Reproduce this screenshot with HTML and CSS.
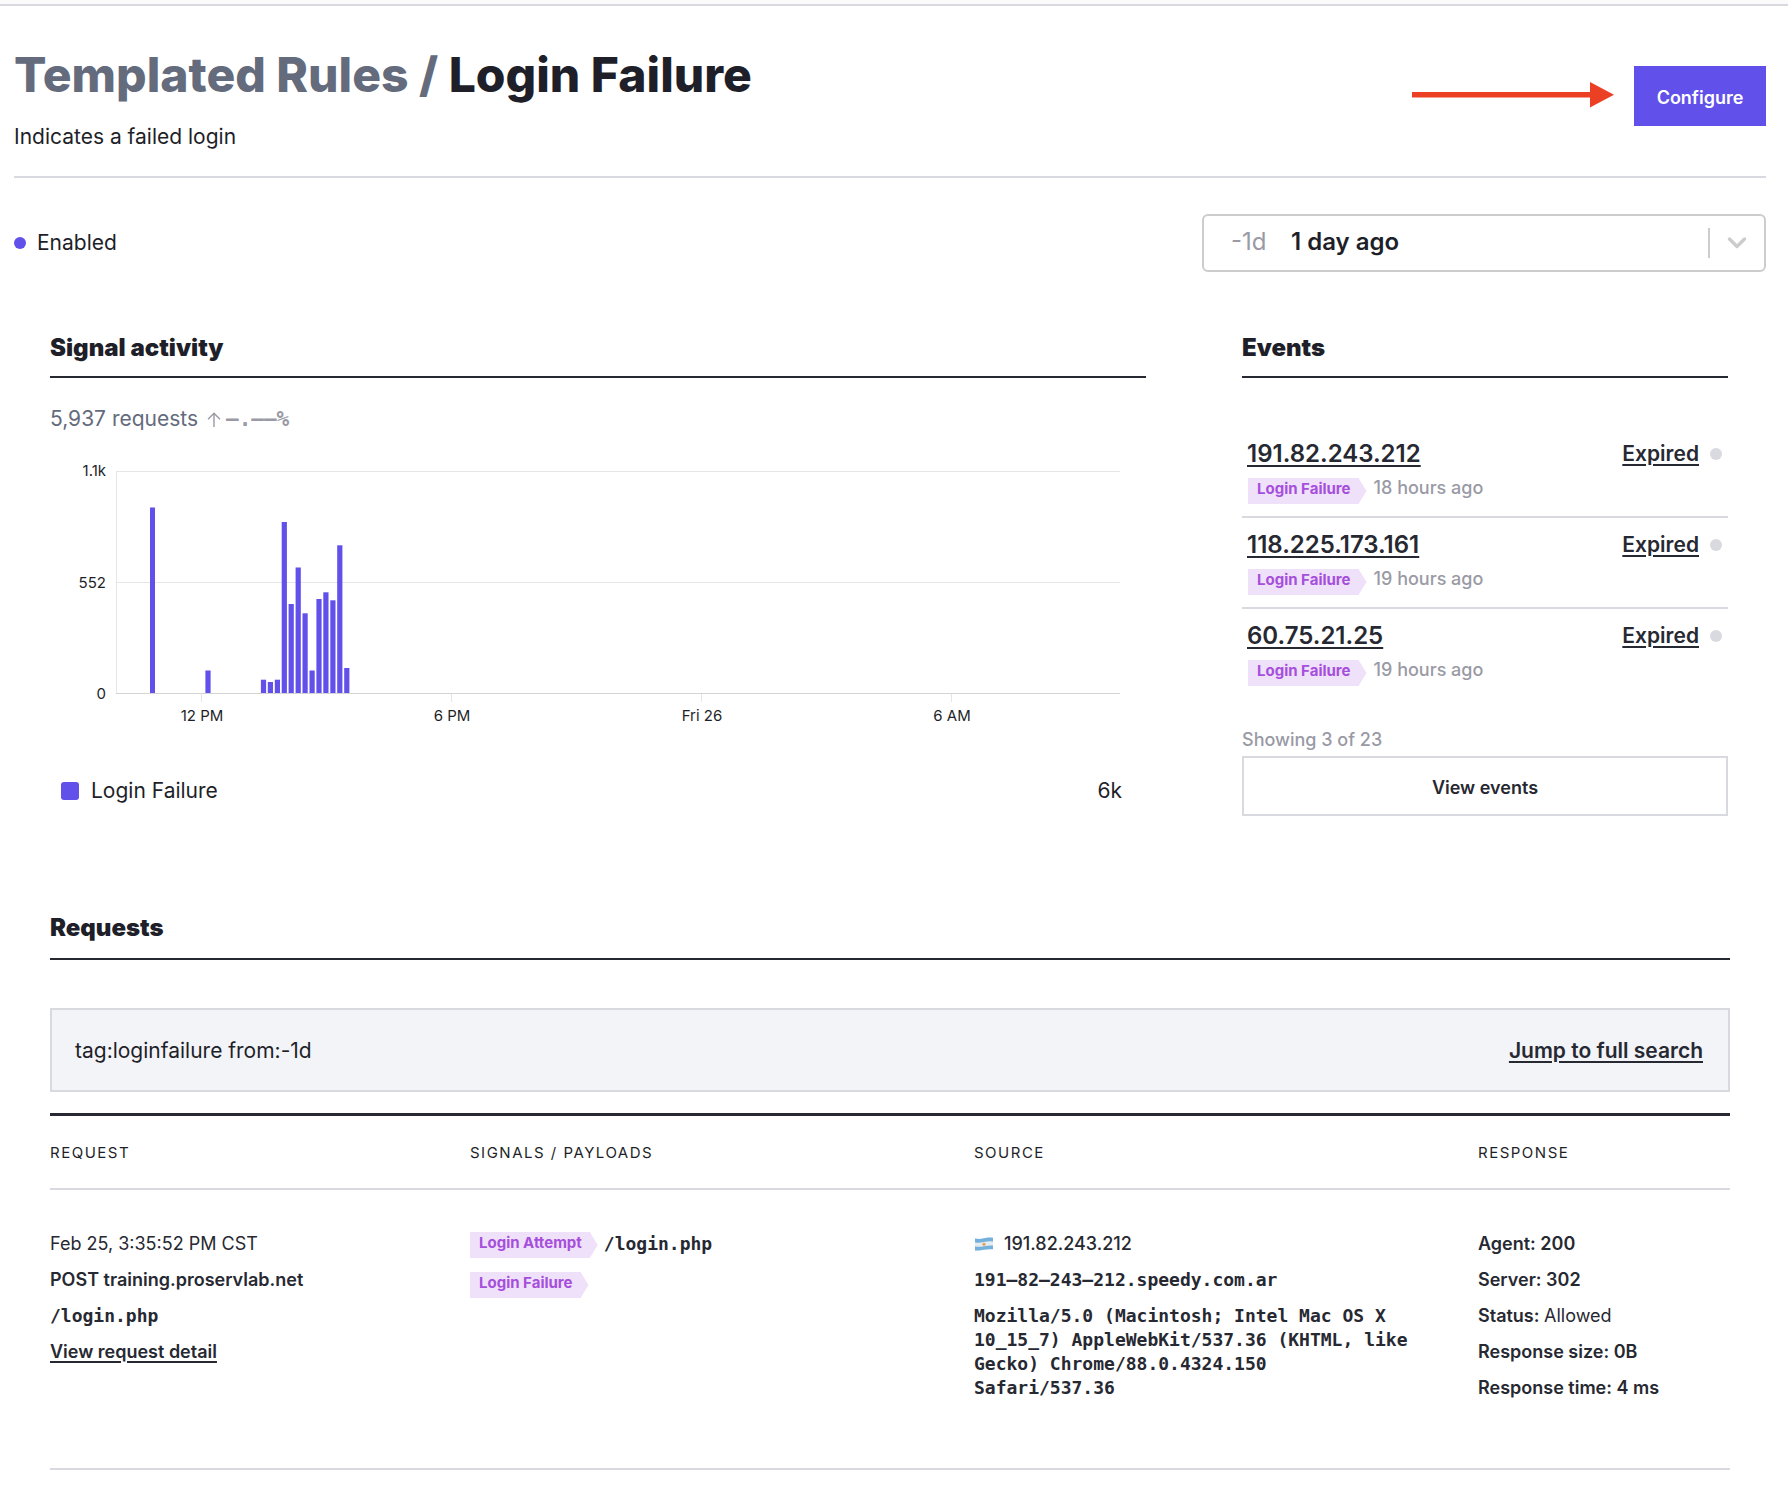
FILE: index.html
```html
<!DOCTYPE html>
<html lang="en">
<head>
<meta charset="utf-8">
<title>Templated Rules / Login Failure</title>
<link rel="stylesheet" href="styles.css">
</head>
<body>
<div class="topbar"></div>
<main class="page">
  <header class="page-header">
    <div>
      <h1 class="title"><a class="title-parent" href="#">Templated Rules /</a> Login Failure</h1>
      <p class="subtitle">Indicates a failed login</p>
    </div>
    <div class="header-action">
      <svg class="pointer" width="202" height="26" viewBox="0 0 202 26" aria-hidden="true"><path d="M0 10h178V0l24 12.700L178 25.500V15.500H0z" fill="#ec4025"/></svg>
      <button class="btn btn-primary" type="button">Configure</button>
    </div>
  </header>

  <div class="toolbar">
    <p class="state"><span class="dot dot-on"></span>Enabled</p>
    <div class="range">
      <label class="range-code" for="range">-1d</label>
      <select class="range-select" id="range"><option>1 day ago</option></select>
      <svg class="range-chevron" width="20" height="14" viewBox="0 0 20 14" aria-hidden="true"><path d="M2.500 3L10 10.500L17.500 3" fill="none" stroke="#ccc" stroke-width="3.400" stroke-linecap="round" stroke-linejoin="round"/></svg>
    </div>
  </div>

  <div class="content">
    <div class="panels">
      <section>
        <h2 class="heading">Signal activity</h2>
        <p class="summary">5,937 requests
          <svg class="trend-icon" width="14" height="15" viewBox="0 0 14 15" aria-hidden="true"><path d="M7 15V1.500M1 7.200L7 1.200L13 7.200" fill="none" stroke="currentColor" stroke-width="1.400"/></svg>
          <span class="trend">–.––%</span></p>
        <div class="chart">
          <div class="y-axis"><span>1.1k</span><span>552</span><span>0</span></div>
          <div>
            <svg class="plot" viewBox="0 0 1004 231" preserveAspectRatio="none" role="img" aria-label="Login Failure requests over the last day">
              <g fill="#e6e6e8">
                <rect width="1004" height="1"/><rect y="111" width="1004" height="1"/><rect width="1" height="223"/>
                <rect x="85" y="223" width="1" height="8"/><rect x="335" y="223" width="1" height="8"/><rect x="585" y="223" width="1" height="8"/><rect x="835" y="223" width="1" height="8"/>
              </g>
              <g fill="#6150ea">
                <rect x="34" y="36.500" width="5" height="185.500"/>
                <rect x="89.400" y="199.500" width="5.200" height="22.500"/>
                <rect x="144.900" y="208.700" width="5.200" height="13.300"/>
                <rect x="151.800" y="211" width="5.200" height="11"/>
                <rect x="158.800" y="208.700" width="5.200" height="13.300"/>
                <rect x="165.700" y="51" width="5.200" height="171"/>
                <rect x="172.600" y="133" width="5.200" height="89"/>
                <rect x="179.600" y="96.500" width="5.200" height="125.500"/>
                <rect x="186.500" y="142.300" width="5.200" height="79.700"/>
                <rect x="193.500" y="199.500" width="5.200" height="22.500"/>
                <rect x="200.400" y="128" width="5.200" height="94"/>
                <rect x="207.300" y="121.300" width="5.200" height="100.700"/>
                <rect x="214.300" y="129.300" width="5.200" height="92.700"/>
                <rect x="221.200" y="74.300" width="5.200" height="147.700"/>
                <rect x="228.200" y="197" width="5.200" height="25"/>
              </g>
              <rect y="222" width="1004" height="1" fill="#d4d4d6"/>
            </svg>
            <div class="x-axis"><span>12 PM</span><span>6 PM</span><span>Fri 26</span><span>6 AM</span></div>
          </div>
        </div>
        <p class="legend"><span class="swatch"></span>Login Failure<span class="legend-total">6k</span></p>
      </section>

      <section>
        <h2 class="heading">Events</h2>
        <ul class="events">
          <li class="event">
            <div class="event-top"><a class="event-ip" href="#">191.82.243.212</a><a class="event-state" href="#">Expired</a><span class="dot"></span></div>
            <div class="event-meta"><span class="tag">Login Failure</span><span class="event-time">18 hours ago</span></div>
          </li>
          <li class="event">
            <div class="event-top"><a class="event-ip" href="#">118.225.173.161</a><a class="event-state" href="#">Expired</a><span class="dot"></span></div>
            <div class="event-meta"><span class="tag">Login Failure</span><span class="event-time">19 hours ago</span></div>
          </li>
          <li class="event">
            <div class="event-top"><a class="event-ip" href="#">60.75.21.25</a><a class="event-state" href="#">Expired</a><span class="dot"></span></div>
            <div class="event-meta"><span class="tag">Login Failure</span><span class="event-time">19 hours ago</span></div>
          </li>
        </ul>
        <p class="showing">Showing 3 of 23</p>
        <button class="btn btn-outline" type="button">View events</button>
      </section>
    </div>

    <section class="requests">
      <h2 class="heading">Requests</h2>
      <div class="query"><span>tag:loginfailure from:-1d</span><a class="query-link" href="#">Jump to full search</a></div>
      <table class="table">
        <thead>
          <tr><th class="col-request">Request</th><th class="col-signals">Signals / Payloads</th><th class="col-source">Source</th><th class="col-response">Response</th></tr>
        </thead>
        <tbody>
          <tr>
            <td>
              <div class="lines">
                <p class="plain">Feb 25, 3:35:52 PM CST</p>
                <p>POST training.proservlab.net</p>
                <p class="mono">/login.php</p>
                <p><a href="#">View request detail</a></p>
              </div>
            </td>
            <td>
              <div class="signals">
                <div class="signal"><span class="tag">Login Attempt</span><span class="mono">/login.php</span></div>
                <div class="signal"><span class="tag">Login Failure</span></div>
              </div>
            </td>
            <td>
              <div class="lines source">
                <p class="ip"><svg class="flag" width="20" height="16" viewBox="0 0 20 16" role="img" aria-label="Argentina"><path d="M1 2.500Q5.500 3.500 10 2.200T19 1.500V13Q14.500 12.500 10 13.800T1 14.500z" fill="#e6ebf0"/><path d="M1 2.500Q5.500 3.500 10 2.200T19 1.800V5.500Q14.500 5 10 6T1 6.500z" fill="#74b0dc"/><path d="M1 10.500Q5.500 11.200 10 10.200T19 9.500V13.300Q14.500 12.800 10 13.800T1 14.500z" fill="#74b0dc"/><circle cx="10" cy="8.200" r="1.500" fill="#e0a050"/></svg>191.82.243.212</p>
                <p class="mono">191–82–243–212.speedy.com.ar</p>
                <p class="mono">Mozilla/5.0 (Macintosh; Intel Mac OS X 10_15_7) AppleWebKit/537.36 (KHTML, like Gecko) Chrome/88.0.4324.150 Safari/537.36</p>
              </div>
            </td>
            <td>
              <div class="lines">
                <p>Agent: 200</p>
                <p>Server: 302</p>
                <p>Status: <span class="plain">Allowed</span></p>
                <p>Response size: 0B</p>
                <p>Response time: 4 ms</p>
              </div>
            </td>
          </tr>
        </tbody>
      </table>
    </section>
  </div>
</main>
</body>
</html>
```
FILE: styles.css
```css
* { box-sizing: border-box; }

body {
  margin: 0;
  background: #fff;
  color: #1e1f29;
  font: 400 21px/32px Inter, "Liberation Sans", sans-serif;
}

h1, h2, p, ul { margin: 0; padding: 0; }
a { color: #272932; text-decoration: underline; text-decoration-thickness: 2px; text-underline-offset: 3px; }

.topbar { height: 6px; background: #fbfbfb; border-bottom: 2px solid #d9d9e0; }
.page { padding: 0 22px 0 14px; }

.page-header {
  display: flex;
  justify-content: space-between;
  padding: 39px 0 23px;
  border-bottom: 2px solid #d9d9e0;
}
.title { font-size: 48px; line-height: 60px; font-weight: 800; }
.title-parent { color: #646b7c; text-decoration: none; }
.subtitle { margin-top: 16px; }

.header-action { position: relative; margin-top: 21px; }
.pointer { position: absolute; top: 16px; right: 152px; }

.btn {
  display: block;
  height: 60px;
  padding: 4px 20px 0;
  border: 0;
  font: 600 18px/24px Inter, "Liberation Sans", sans-serif;
}
.btn-primary { min-width: 132px; background: #6150ea; color: #fff; }
.btn-outline { width: 100%; border: 2px solid #d9d9e0; background: #fff; color: #272932; }

.dot { flex: none; width: 12px; height: 12px; border-radius: 50%; background: #d9d9e0; }
.dot-on { background: #6150ea; }

.toolbar { display: flex; justify-content: space-between; align-items: center; padding-top: 36px; }
.state { display: flex; align-items: center; gap: 11px; }
.range {
  display: flex;
  align-items: center;
  width: 564px;
  height: 58px;
  padding: 0 17px 2px 27px;
  border: 2px solid #ccc;
  border-radius: 6px;
  font-size: 24px;
}
.range-code { width: 60px; color: #999aa5; }
.range-select {
  flex: 1;
  height: 32px;
  padding: 0;
  border: 0;
  appearance: none;
  background: none;
  color: #1e1f29;
  font: 600 24px/32px Inter, "Liberation Sans", sans-serif;
}
.range-chevron { box-sizing: content-box; margin-top: 2px; padding: 8px 0 8px 17px; border-left: 2px solid #ccc; }

.content { padding: 0 36px; }
.panels { display: grid; grid-template-columns: 1096fr 486fr; column-gap: 96px; padding: 60px 2px 0 0; }
.heading { padding-bottom: 12px; border-bottom: 2px solid #272932; font-size: 24px; line-height: 32px; font-weight: 900; }

.summary { display: flex; align-items: center; margin-top: 25px; color: #646b7c; }
.trend-icon { margin: 0 5px 0 9px; color: #999aa5; }
.trend { color: #999aa5; font-family: "DejaVu Sans Mono", monospace; font-weight: 700; }

.chart { display: grid; grid-template-columns: 66px 1fr; margin-top: 36px; padding-right: 26px; font-size: 15px; line-height: 20px; }
.y-axis { display: flex; flex-direction: column; justify-content: space-between; height: 243px; margin-top: -10px; padding-right: 10px; text-align: right; }
.plot { display: block; width: 100%; height: 231px; }
.x-axis { display: grid; grid-template-columns: repeat(4, 250fr) 43fr; margin: 4px 0 0 -39px; text-align: center; }

.legend { display: flex; align-items: center; margin-top: 49px; padding: 0 24px 0 11px; }
.swatch { width: 18px; height: 18px; margin-right: 12px; border-radius: 3px; background: #6150ea; }
.legend-total { margin-left: auto; }

.events { margin-top: 49px; list-style: none; }
.event { padding: 11px 6px 12px 5px; border-bottom: 2px solid #d9d9e0; }
.event:last-child { border-bottom: 0; }
.event-top { display: flex; align-items: center; }
.event-ip { margin-right: auto; font-size: 24px; font-weight: 600; }
.event-state { margin-right: 11px; font-weight: 600; }
.event-meta { display: flex; align-items: flex-start; gap: 7px; margin-top: 8px; padding-left: 1px; }
.event-time { color: #999aa5; font-size: 18px; line-height: 20px; font-weight: 500; }

.tag {
  padding: 0 16px 4px 9px;
  background: #f0e1fa;
  clip-path: polygon(0 0, calc(100% - 8px) 0, 100% 50%, calc(100% - 8px) 100%, 0 100%);
  color: #a54fdc;
  font-size: 15px;
  line-height: 22px;
  font-weight: 700;
}

.showing { margin: 30px 0 4px; color: #999aa5; font-size: 18px; line-height: 24px; font-weight: 500; }

.requests { margin-top: 96px; }
.requests .heading { padding-bottom: 14px; }
.query {
  display: flex;
  align-items: center;
  justify-content: space-between;
  height: 84px;
  margin-top: 48px;
  padding: 2px 25px 0 23px;
  border: 2px solid #d9d9e0;
  background: #f3f4f8;
}
.query-link { font-weight: 600; }

.table { width: 100%; margin-top: 21px; border-spacing: 0; border-top: 3px solid #272932; table-layout: fixed; }
.table th {
  padding: 27px 0 25px;
  border-bottom: 2px solid #d9d9e0;
  font-size: 15px;
  line-height: 20px;
  font-weight: 400;
  letter-spacing: 1.5px;
  text-align: left;
  text-transform: uppercase;
}
.table td {
  padding: 42px 0 68px;
  border-bottom: 2px solid #d9d9e0;
  color: #272932;
  font-size: 18px;
  line-height: 24px;
  font-weight: 600;
  vertical-align: top;
}
.col-request { width: 25%; }
.col-signals, .col-source { width: 30%; }
.col-response { width: 15%; }

.lines { display: flex; flex-direction: column; gap: 12px; }
.source { padding-right: 64px; }
.ip { display: flex; align-items: center; gap: 10px; font-weight: 500; }
.plain { font-weight: 400; }
.mono { font-family: "DejaVu Sans Mono", monospace; font-weight: 700; }
.signals { display: flex; flex-direction: column; gap: 14px; }
.signal { display: flex; align-items: flex-start; gap: 6px; }
```
